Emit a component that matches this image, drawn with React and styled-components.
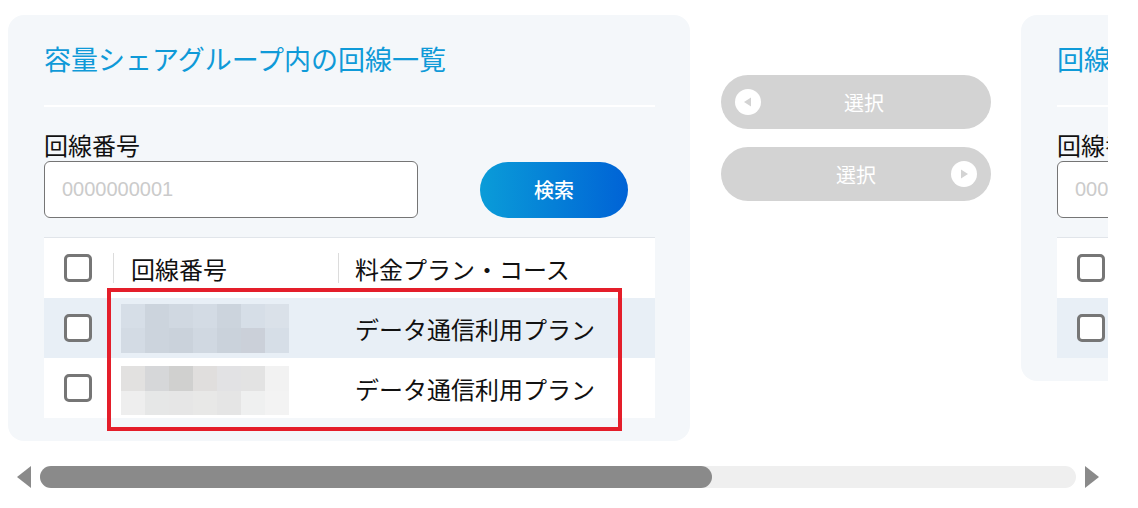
import React from "react";
import styled, { createGlobalStyle } from "styled-components";

const Global = createGlobalStyle`
  html, body { margin: 0; padding: 0; background: #ffffff; }
  body { font-family: "Noto Sans CJK JP", "Noto Sans", sans-serif; color: #111; }
  * { box-sizing: border-box; }
`;

const Page = styled.div`
  padding: 8px 0 0 8px;
  width: 1138px;
`;

const Viewport = styled.div`
  width: 1100px;
  overflow: hidden;
  padding-top: 7px;
`;

const Track = styled.div`
  display: flex;
  align-items: flex-start;
  width: max-content;
`;

const Card = styled.section`
  width: 682px;
  background: #f4f7fa;
  border-radius: 16px;
  padding: 26px 35px 23px 36px;
`;

const Title = styled.h2`
  margin: 0;
  font-size: 27px;
  line-height: 36px;
  font-weight: 400;
  color: #0f9ad8;
  white-space: nowrap;
`;

const Divider = styled.div`
  height: 2px;
  background: #ffffff;
  margin-top: 28px;
`;

const Label = styled.div`
  margin-top: 24px;
  font-size: 24px;
  line-height: 28px;
  color: #111;
`;

const SearchRow = styled.div`
  display: flex;
  align-items: center;
  gap: 62px;
  margin-top: 2px;
`;

const Input = styled.input`
  width: 374px;
  height: 57px;
  border: 1px solid #757575;
  border-radius: 6px;
  background: #fff;
  padding: 0 17px;
  font-family: "Liberation Sans", Arial, sans-serif;
  font-size: 20px;
  color: #333;
  outline: none;
  &::placeholder { color: #cbcbcb; }
`;

const SearchButton = styled.button`
  width: 148px;
  height: 56px;
  border: none;
  border-radius: 28px;
  background: linear-gradient(90deg, #0a9cd8 0%, #0063d6 100%);
  color: #fff;
  font-family: "Noto Sans CJK JP", sans-serif;
  font-size: 20px;
  font-weight: 500;
  cursor: pointer;
`;

const TableWrap = styled.div`
  position: relative;
  margin-top: 19px;
  border-top: 1px solid #e1e5ea;
`;

const Row = styled.div`
  display: grid;
  grid-template-columns: 69px 225px 1fr;
  height: 60px;
  align-items: center;
  background: ${(p) => (p.$tint ? "#e8eff6" : "#ffffff")};
`;

const CheckCell = styled.div`
  padding-left: 20px;
  display: flex;
  align-items: center;
`;

const Checkbox = styled.span`
  display: block;
  width: 28px;
  height: 28px;
  border: 3px solid #767676;
  border-radius: 5px;
  background: #fff;
`;

const HeadCell = styled.div`
  height: 30px;
  border-left: 1px solid #dcdcdc;
  padding-left: ${(p) => p.$pad}px;
  display: flex;
  align-items: center;
  font-size: 24px;
  white-space: nowrap;
  color: #111;
`;

const Cell = styled.div`
  padding-left: ${(p) => p.$pad}px;
  font-size: 24px;
  white-space: nowrap;
  color: #111;
  display: flex;
  align-items: center;
`;

const Mosaic = styled.div`
  display: grid;
  grid-template-columns: repeat(7, 24px);
  grid-auto-rows: 24.5px;
  margin-top: ${(p) => p.$shift}px;
`;

const Tile = styled.span`
  display: block;
  background: ${(p) => p.$c};
`;

const Annotation = styled.div`
  position: absolute;
  left: 63px;
  top: 50px;
  width: 515px;
  height: 143px;
  border: 4px solid #e41e2a;
  pointer-events: none;
`;

const Middle = styled.div`
  width: 270px;
  margin: 60px 30px 0 31px;
  display: flex;
  flex-direction: column;
  gap: 18px;
`;

const MoveButton = styled.button`
  display: grid;
  grid-template-columns: 54px 1fr 54px;
  align-items: center;
  width: 270px;
  height: 54px;
  padding: 0;
  border: none;
  border-radius: 27px;
  background: #d3d3d3;
  color: #fff;
  font-family: "Noto Sans CJK JP", sans-serif;
  font-size: 20px;
  cursor: default;
`;

const BtnText = styled.span`
  grid-column: 2;
  text-align: center;
  padding-left: ${(p) => p.$shift || 0}px;
`;

const IconSlot = styled.span`
  grid-column: ${(p) => p.$col};
  display: flex;
  justify-content: center;
  align-items: center;
`;

const Scrollbar = styled.div`
  display: flex;
  align-items: center;
  width: 1100px;
  height: 22px;
  margin-top: 25px;
`;

const ArrowBox = styled.div`
  width: 32px;
  height: 22px;
  display: flex;
  justify-content: center;
  align-items: center;
`;

const Arrow = styled.span`
  width: 0;
  height: 0;
  border-top: 11px solid transparent;
  border-bottom: 11px solid transparent;
  ${(p) =>
    p.$dir === "left"
      ? "border-right: 14px solid #8a8a8a;"
      : "border-left: 14px solid #8a8a8a;"}
`;

const Rail = styled.div`
  flex: 1;
  height: 22px;
  background: #efefef;
  border-radius: 11px;
  display: flex;
`;

const Thumb = styled.div`
  height: 22px;
  background: #8a8a8a;
  border-radius: 11px;
`;

const mosaicA = [
  "#d6dee7", "#ccd4dd", "#d0d8e1", "#d3dbe4", "#ccd4dd", "#d6dee7", "#dae1e9",
  "#d3dbe4", "#ccd4dd", "#cad2db", "#d0d8e1", "#cad2db", "#cbd0d9", "#d6dee7",
];
const mosaicB = [
  "#e2e1e0", "#d6d7d9", "#d0d0cf", "#e0dedd", "#e2e2e4", "#e3e3e3", "#f2f2f2",
  "#eeeeee", "#e6e7e7", "#e6e6e6", "#e8e8e7", "#e5e5e5", "#eff0f0", "#f3f3f3",
];

function PlayIcon({ dir }) {
  return (
    <svg width="26" height="26" viewBox="0 0 26 26">
      <circle cx="13" cy="13" r="13" fill="#ffffff" />
      {dir === "left" ? (
        <polygon points="9,13 16,8.5 16,17.5" fill="#d3d3d3" />
      ) : (
        <polygon points="17,13 10,8.5 10,17.5" fill="#d3d3d3" />
      )}
    </svg>
  );
}

function LinePanel({ title, rows, annotate }) {
  return (
    <Card>
      <Title>{title}</Title>
      <Divider />
      <Label>回線番号</Label>
      <SearchRow>
        <Input placeholder="0000000001" />
        <SearchButton>検索</SearchButton>
      </SearchRow>
      <TableWrap>
        <Row>
          <CheckCell><Checkbox /></CheckCell>
          <HeadCell $pad={17}>回線番号</HeadCell>
          <HeadCell $pad={16}>料金プラン・コース</HeadCell>
        </Row>
        {rows.map((r, i) => (
          <Row key={i} $tint={i % 2 === 0}>
            <CheckCell><Checkbox /></CheckCell>
            <Cell $pad={8}>
              <Mosaic $shift={r.shift}>
                {r.tiles.map((c, j) => (
                  <Tile key={j} $c={c} />
                ))}
              </Mosaic>
            </Cell>
            <Cell $pad={17}>{r.plan}</Cell>
          </Row>
        ))}
        {annotate && <Annotation />}
      </TableWrap>
    </Card>
  );
}

export default function App() {
  return (
    <>
      <Global />
      <Page>
        <Viewport>
          <Track>
            <LinePanel
              title="容量シェアグループ内の回線一覧"
              annotate
              rows={[
                { tiles: mosaicA, plan: "データ通信利用プラン", shift: 0 },
                { tiles: mosaicB, plan: "データ通信利用プラン", shift: 5 },
              ]}
            />
            <Middle>
              <MoveButton>
                <IconSlot $col={1}><PlayIcon dir="left" /></IconSlot>
                <BtnText $shift={16}>選択</BtnText>
              </MoveButton>
              <MoveButton>
                <BtnText>選択</BtnText>
                <IconSlot $col={3}><PlayIcon dir="right" /></IconSlot>
              </MoveButton>
            </Middle>
            <LinePanel
              title="回線一覧"
              rows={[{ tiles: mosaicA, plan: "データ通信利用プラン", shift: 0 }]}
            />
          </Track>
        </Viewport>
        <Scrollbar>
          <ArrowBox><Arrow $dir="left" /></ArrowBox>
          <Rail>
            <Thumb style={{ width: "64.9%" }} />
          </Rail>
          <ArrowBox><Arrow $dir="right" /></ArrowBox>
        </Scrollbar>
      </Page>
    </>
  );
}
